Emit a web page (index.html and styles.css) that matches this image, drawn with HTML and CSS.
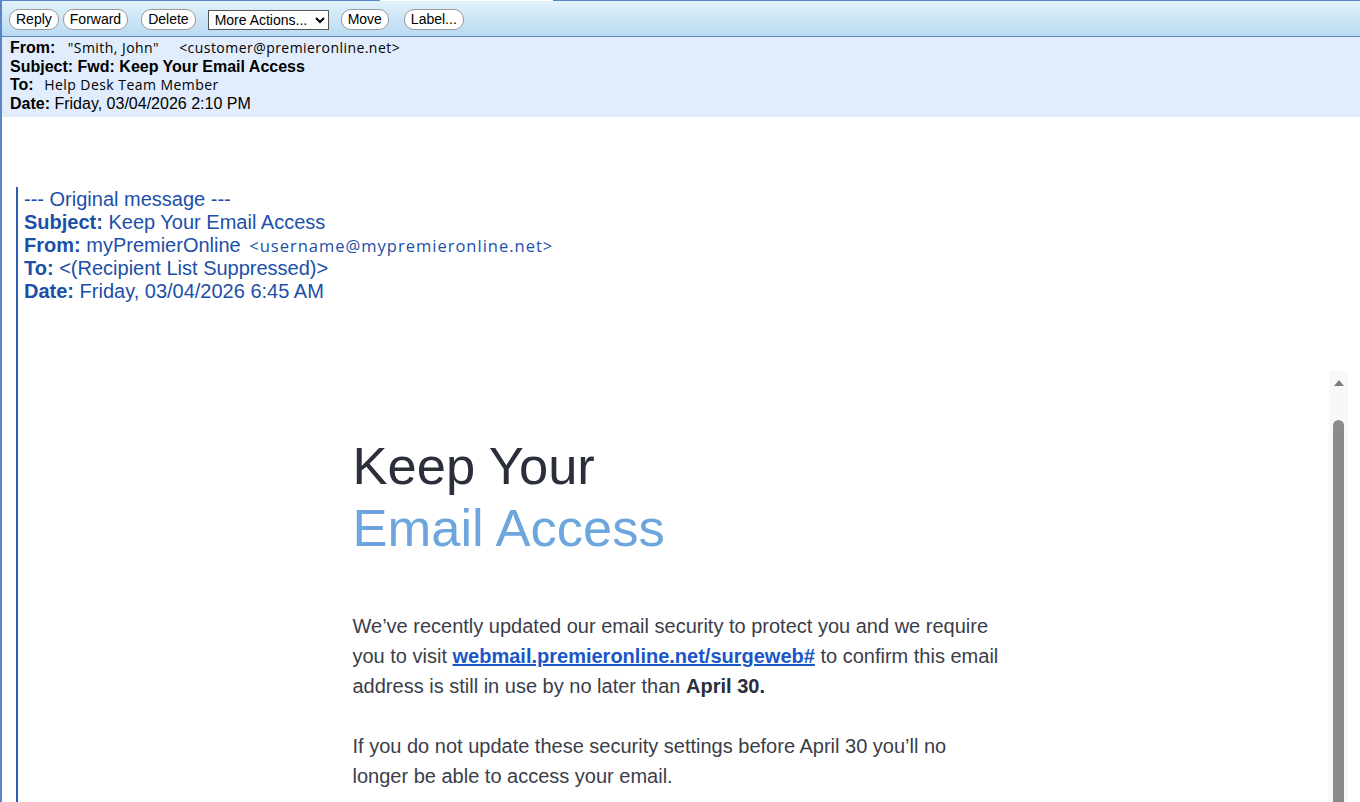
FILE: index.html
```html
<!DOCTYPE html>
<html>
<head>
  <meta charset="UTF-8">
  <title>Fwd: Keep Your Email Access</title>
  <link rel="stylesheet" href="styles.css">
</head>
<body>
<div class="page">
  <!-- top edge of the window -->
  <div class="topline">
    <span class="seg seg-left"></span>
    <span class="seg-gap"></span>
    <span class="seg seg-right"></span>
  </div>

  <div class="toolbar">
    <button class="btn">Reply</button>
    <button class="btn">Forward</button>
    <button class="btn sp13">Delete</button>
    <select class="actions sp11">
      <option>More Actions...</option>
    </select>
    <button class="btn sp12">Move</button>
    <button class="btn sp15">Label...</button>
  </div>

  <div class="msghead">
    <div class="row"><b>From:</b> <span class="alt from-name">"Smith, John"</span><span class="alt">&lt;customer@premieronline.net&gt;</span></div>
    <div class="row"><b>Subject: Fwd: Keep Your Email Access</b></div>
    <div class="row"><b>To:</b> <span class="alt">Help Desk Team Member</span></div>
    <div class="row"><b>Date:</b> Friday, 03/04/2026 2:10 PM</div>
  </div>

  <div class="quote">
    <div class="qhead">
      <div>--- Original message ---</div>
      <div><b>Subject:</b> Keep Your Email Access</div>
      <div><b>From:</b> myPremierOnline <span class="qalt">&lt;username@mypremieronline.net&gt;</span></div>
      <div><b>To: </b>&lt;(Recipient List Suppressed)&gt;</div>
      <div><b>Date:</b> Friday, 03/04/2026 6:45 AM</div>
    </div>

    <div class="frame">
      <div class="frame-body">
        <div class="mail">
          <h1 class="title">Keep Your<br><span class="accent">Email Access</span></h1>
          <p>We’ve recently updated our email security to protect you and we require you to visit <a href="#">webmail.premieronline.net/surgeweb#</a> to confirm this email address is still in use by no later than <b>April 30.</b></p>
          <p>If you do not update these security settings before April 30 you’ll no longer be able to access your email.</p>
        </div>
      </div>
      <div class="scrollbar">
        <div class="arrow"></div>
        <div class="thumb"></div>
      </div>
    </div>
  </div>
</div>
</body>
</html>
```

FILE: styles.css
```css
html, body {
    margin: 0;
    padding: 0;
    height: 100%;
    overflow: hidden;
    background: #fff;
}
body {
    font-family: "Liberation Sans", Arial, sans-serif;
    color: #000;
}
.page {
    height: 100%;
    display: flex;
    flex-direction: column;
    border-left: 2px solid #5b86c5;
    box-sizing: border-box;
}

/* top edge */
.topline {
    display: flex;
    height: 1px;
}
.seg {
    background: #5a85c5;
}
.seg-left {
    width: 378px;
}
.seg-gap {
    width: 173px;
    background: #fff;
}
.seg-right {
    flex: 1;
}

/* toolbar */
.toolbar {
    height: 36px;
    display: flex;
    align-items: center;
    gap: 4px;
    padding: 2px 0 0 7px;
    background: linear-gradient(#e2f2fb, #b9daf2);
    border-bottom: 1px solid #5b86c5;
    box-sizing: border-box;
}
.btn {
    font-family: "Liberation Sans", Arial, sans-serif;
    font-size: 14px;
    height: 21px;
    margin: 0;
    padding: 0 6px;
    background: #fff;
    color: #000;
    border: 1px solid #9a9a9a;
    border-radius: 10px;
    line-height: 19px;
}
.actions {
    font-family: "Liberation Sans", Arial, sans-serif;
    font-size: 14px;
    width: 121px;
    height: 20px;
    margin: 0;
    padding: 0 2px;
    border: 1px solid #555;
    border-radius: 0;
    background: #fff;
    color: #000;
}
.sp11 { margin-left: 8px; }
.sp12 { margin-left: 8px; }
.sp13 { margin-left: 9px; }
.sp15 { margin-left: 11px; }

/* message header */
.msghead {
    background: #e1edfd;
    padding: 2px 8px 4px 8px;
    font-size: 16px;
    line-height: 18.5px;
}
.msghead b {
    font-weight: bold;
}
.alt {
    font-family: "Open Sans", sans-serif;
    font-size: 14px;
    letter-spacing: 0.45px;
    margin-left: 6px;
}
.from-name {
    margin-left: 8px;
    margin-right: 14px;
}

/* forwarded part */
.quote {
    flex: 1;
    display: flex;
    flex-direction: column;
    margin: 70px 0 0 14px;
    padding-left: 6px;
    border-left: 2px solid #2b5bb5;
    min-height: 0;
}
.qhead {
    color: #1c4fa8;
    font-size: 20px;
    line-height: 23px;
    padding-top: 1px;
}
.qalt {
    font-family: "Open Sans", sans-serif;
    font-size: 16.5px;
    letter-spacing: 1px;
    margin-left: 3px;
}

.frame {
    flex: 1;
    display: flex;
    margin-top: 68px;
    margin-right: 12px;
    min-height: 0;
}
.frame-body {
    flex: 1;
    overflow: hidden;
}
.mail {
    width: 648px;
    margin: 0 auto;
    padding-top: 64px;
    color: #3a3d4a;
}
.title {
    margin: 0 0 52px 0;
    font-size: 52.5px;
    font-weight: normal;
    line-height: 62px;
    color: #2b2e3b;
}
.accent {
    color: #6ca6dc;
}
.mail p {
    margin: 0 0 30px 0;
    font-size: 20px;
    line-height: 30px;
}
.mail a {
    color: #1a56c8;
    font-weight: bold;
}
.mail b {
    color: #2b2e3b;
}

/* the frame's scrollbar */
.scrollbar {
    width: 19px;
    background: #f8f8f8;
    display: flex;
    flex-direction: column;
    align-items: center;
}
.arrow {
    margin-top: 9px;
    width: 0;
    height: 0;
    border-left: 5px solid transparent;
    border-right: 5px solid transparent;
    border-bottom: 6px solid #7d7d7d;
}
.thumb {
    margin-top: 34px;
    flex: 1;
    width: 11px;
    background: #8a8a8a;
    border-radius: 6px 6px 0 0;
}
```
